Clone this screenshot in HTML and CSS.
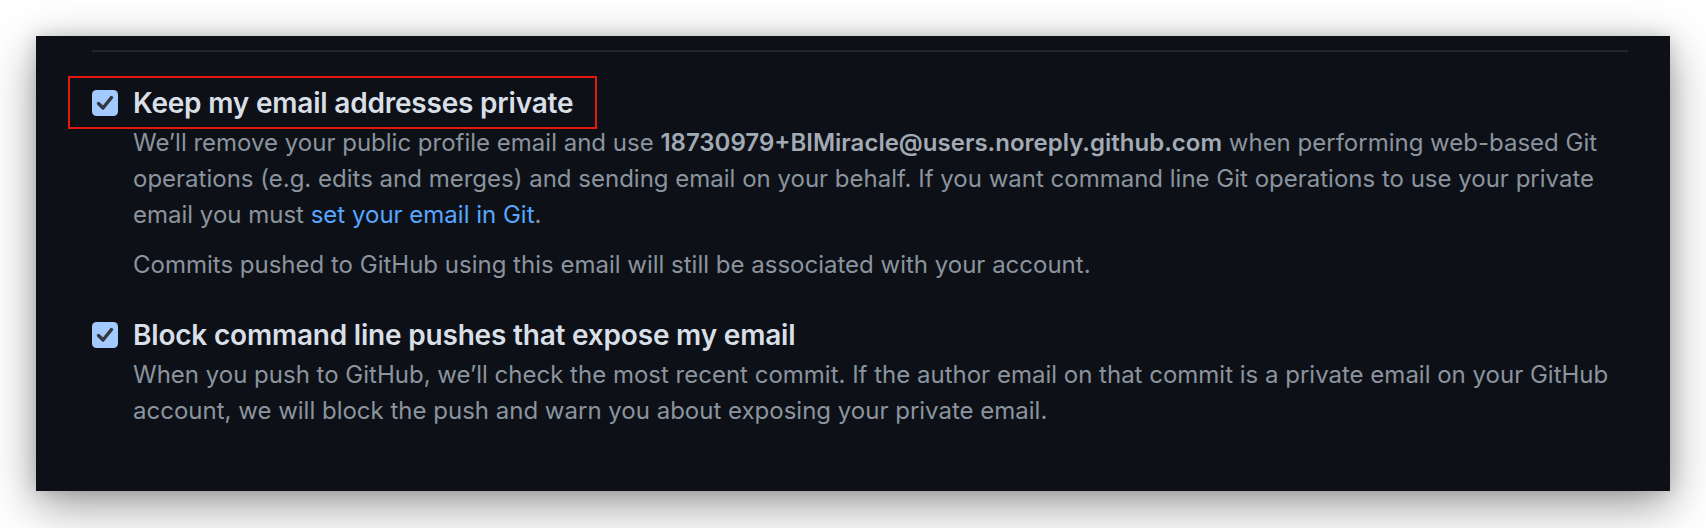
FILE: index.html
```html
<!DOCTYPE html>
<html lang="en">
<head>
<meta charset="utf-8">
<title>Email settings</title>
<link rel="stylesheet" href="styles.css">
</head>
<body>
<div class="stage">
  <section class="panel">
    <div class="divider"></div>

    <div class="option">
      <div class="option-head highlighted">
        <span class="checkbox">
          <svg viewBox="0 0 26 26" width="26" height="26" aria-hidden="true">
            <rect x="0" y="0" width="26" height="26" rx="4.5" fill="#a3caff"/>
            <path d="M6.5 13.5 L11 18 L19.5 7.5" fill="none" stroke="#333840" stroke-width="3.4" stroke-linecap="round" stroke-linejoin="round"/>
          </svg>
        </span>
        <span class="option-title">Keep my email addresses private</span>
      </div>
      <div class="option-note">
        <p>We’ll remove your public profile email and use <strong>18730979+BIMiracle@users.noreply.github.com</strong> when performing web-based Git operations (e.g. edits and merges) and sending email on your behalf. If you want command line Git operations to use your private email you must <a href="#">set your email in Git</a>.</p>
        <p>Commits pushed to GitHub using this email will still be associated with your account.</p>
      </div>
    </div>

    <div class="option">
      <div class="option-head">
        <span class="checkbox">
          <svg viewBox="0 0 26 26" width="26" height="26" aria-hidden="true">
            <rect x="0" y="0" width="26" height="26" rx="4.5" fill="#a3caff"/>
            <path d="M6.5 13.5 L11 18 L19.5 7.5" fill="none" stroke="#333840" stroke-width="3.4" stroke-linecap="round" stroke-linejoin="round"/>
          </svg>
        </span>
        <span class="option-title">Block command line pushes that expose my email</span>
      </div>
      <div class="option-note">
        <p>When you push to GitHub, we’ll check the most recent commit. If the author email on that commit is a private email on your GitHub account, we will block the push and warn you about exposing your private email.</p>
      </div>
    </div>
  </section>
</div>
</body>
</html>
```

FILE: styles.css
```css
* { box-sizing: border-box; }

html, body {
  margin: 0;
  padding: 0;
  background: #ffffff;
}

body {
  font-family: Inter, "Noto Sans", "Liberation Sans", sans-serif;
  -webkit-font-smoothing: antialiased;
  min-height: 528px;
}

.stage {
  padding: 36px 0 0 36px;
}

.panel {
  width: 1634px;
  height: 455px;
  background: #0d1117;
  padding: 14px 42px 0 56px;
  box-shadow: 0 14px 44px rgba(0, 0, 0, 0.40), 0 0 16px rgba(0, 0, 0, 0.14);
}

.divider {
  height: 2px;
  background: #21262d;
}

.option {
  margin-top: 33px;
}

.option + .option {
  margin-top: 34px;
}

.option-head {
  position: relative;
  display: inline-flex;
  align-items: center;
  gap: 15px;
  height: 36px;
}

.option-head.highlighted::after {
  content: "";
  position: absolute;
  left: -24px;
  right: -24px;
  top: -9px;
  bottom: -8px;
  border: 2px solid #e3190f;
  pointer-events: none;
}

.checkbox {
  display: flex;
  width: 26px;
  height: 26px;
}

.option-title {
  font-size: 28px;
  font-weight: 600;
  color: #d9dfe6;
  letter-spacing: -0.2px;
  white-space: nowrap;
}

.option-note {
  padding-left: 41px;
  margin-top: 4px;
  font-size: 24px;
  line-height: 36px;
  color: #8b949e;
  letter-spacing: 0;
}

.option-note p {
  margin: 0;
}

.option-note p + p {
  margin-top: 14px;
}

.option-note strong {
  font-weight: 600;
  color: #a2abb5;
}

.option-note a {
  color: #58a6ff;
  text-decoration: none;
}
```
